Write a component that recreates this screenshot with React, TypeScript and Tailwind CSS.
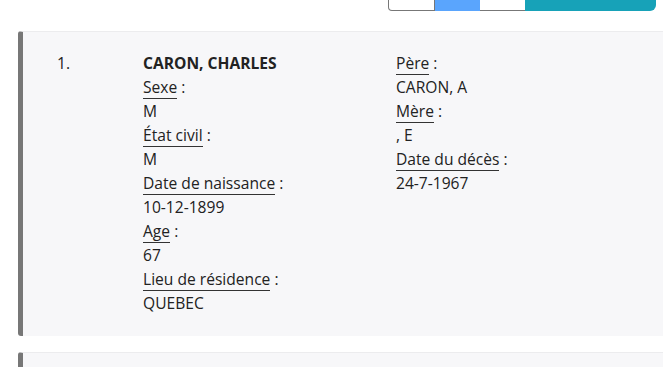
const left = [
  { label: "Sexe", value: "M" },
  { label: "État civil", value: "M" },
  { label: "Date de naissance", value: "10-12-1899" },
  { label: "Age", value: "67" },
  { label: "Lieu de résidence", value: "QUEBEC" },
];

const right = [
  { label: "Père", value: "CARON, A" },
  { label: "Mère", value: ", E" },
  { label: "Date du décès", value: "24-7-1967" },
];

function Field({ label, value }: { label: string; value: string }) {
  return (
    <>
      <div>
        <span className="border-b border-[#333]">{label}</span> :
      </div>
      <div>{value}</div>
    </>
  );
}

export default function App() {
  return (
    <div className="h-[367px] bg-white font-['Open_Sans',sans-serif] text-[15.6px] leading-6 text-[#222] overflow-hidden">
      {/* Toolbar */}
      <div className="flex justify-end pr-[7px]">
        <div className="flex h-[11px]">
          <div className="w-[47px] rounded-bl-[4px] border border-t-0 border-[#777] bg-white" />
          <div className="w-[45px] bg-[#5aa5fd]" />
          <div className="w-[45px] border-b border-[#777] bg-white" />
          <div className="w-[131px] rounded-br-[6px] bg-[#17a2b8]" />
        </div>
      </div>

      <div className="ml-[18px] mt-[20px] flex flex-col gap-[16px]">
        {/* Record */}
        <div className="flex rounded-l-[3px] border-l-[5px] border-t border-[#777] border-t-[#ececee] bg-[#f7f7f9] pb-[21px] pt-[19px]">
          <div className="w-[120px] pl-[34px]">1.</div>
          <div className="w-[253px]">
            <div className="font-bold">CARON, CHARLES</div>
            {left.map((f) => (
              <Field key={f.label} {...f} />
            ))}
          </div>
          <div>
            {right.map((f) => (
              <Field key={f.label} {...f} />
            ))}
          </div>
        </div>

        <div className="h-[40px] rounded-l-[3px] border-l-[5px] border-t border-[#777] border-t-[#ececee] bg-[#f7f7f9]" />
      </div>
    </div>
  );
}
